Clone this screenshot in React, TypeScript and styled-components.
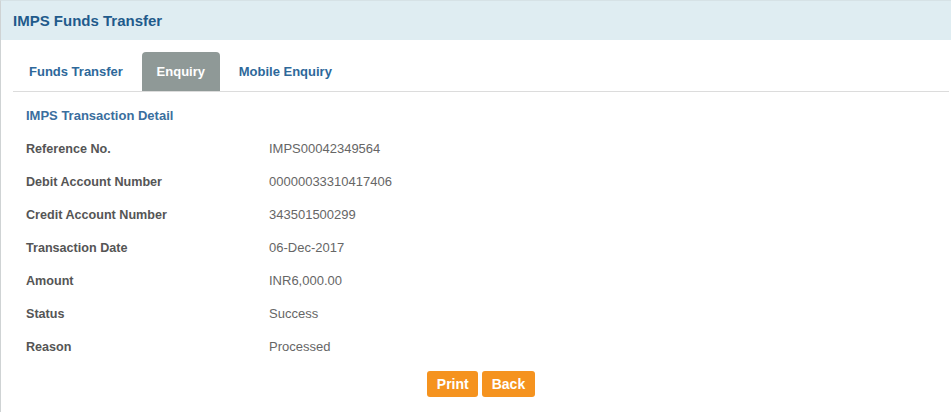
import React from "react";
import styled, { createGlobalStyle } from "styled-components";

const Global = createGlobalStyle`
  html, body { margin: 0; padding: 0; background: #fff; }
  body { font-family: "Liberation Sans", Arial, sans-serif; }
`;

const Panel = styled.div`
  width: 951px;
  height: 412px;
  box-sizing: border-box;
  border-left: 1px solid #cfd3d4;
  border-top: 1px solid #d6e2e6;
  overflow: hidden;
`;

const Header = styled.div`
  height: 39px;
  background: #dfedf2;
  display: flex;
  align-items: center;
  padding-left: 12px;
`;

const Title = styled.h1`
  margin: 0;
  font-size: 15px;
  font-weight: bold;
  color: #1f5b8c;
`;

const Body = styled.div`
  padding: 12px 2px 0 12px;
  display: flex;
  flex-direction: column;
`;

const TabList = styled.div`
  display: flex;
  gap: 3.7px;
  padding-left: 1px;
  border-bottom: 1px solid #dcdcdc;
  height: 39px;
  align-items: stretch;
`;

const Tab = styled.div<{ $active?: boolean }>`
  padding: 0 15px;
  display: flex;
  align-items: center;
  font-size: 13px;
  font-weight: bold;
  border-radius: 4px 4px 0 0;
  color: ${(p) => (p.$active ? "#ffffff" : "#2e689a")};
  background: ${(p) => (p.$active ? "#8f9997" : "transparent")};
`;

const Content = styled.div`
  padding: 7px 0 0 13px;
  display: flex;
  flex-direction: column;
`;

const SectionTitle = styled.div`
  height: 33px;
  line-height: 34px;
  font-size: 13px;
  font-weight: bold;
  color: #3a6e9e;
`;

const Row = styled.div`
  height: 33px;
  display: grid;
  grid-template-columns: 243px 1fr;
  align-items: center;
`;

const Label = styled.div`
  font-size: 12.6px;
  font-weight: bold;
  color: #555;
`;

const Value = styled.div`
  font-size: 13px;
  color: #666;
`;

const Actions = styled.div`
  display: flex;
  justify-content: center;
  gap: 4px;
  margin-top: 8px;
  margin-left: -13px;
`;

const Button = styled.button`
  height: 26px;
  padding: 0 9.5px;
  border: none;
  border-radius: 3px;
  background: #f5931f;
  color: #fff;
  font-family: "Liberation Sans", Arial, sans-serif;
  font-size: 14px;
  font-weight: bold;
  cursor: pointer;
`;

const rows: [string, string][] = [
  ["Reference No.", "IMPS00042349564"],
  ["Debit Account Number", "00000033310417406"],
  ["Credit Account Number", "343501500299"],
  ["Transaction Date", "06-Dec-2017"],
  ["Amount", "INR6,000.00"],
  ["Status", "Success"],
  ["Reason", "Processed"],
];

export default function App() {
  return (
    <>
      <Global />
      <Panel>
        <Header>
          <Title>IMPS Funds Transfer</Title>
        </Header>
        <Body>
          <TabList>
            <Tab>Funds Transfer</Tab>
            <Tab $active>Enquiry</Tab>
            <Tab>Mobile Enquiry</Tab>
          </TabList>
          <Content>
            <SectionTitle>IMPS Transaction Detail</SectionTitle>
            {rows.map(([l, v]) => (
              <Row key={l}>
                <Label>{l}</Label>
                <Value>{v}</Value>
              </Row>
            ))}
            <Actions>
              <Button>Print</Button>
              <Button>Back</Button>
            </Actions>
          </Content>
        </Body>
      </Panel>
    </>
  );
}
